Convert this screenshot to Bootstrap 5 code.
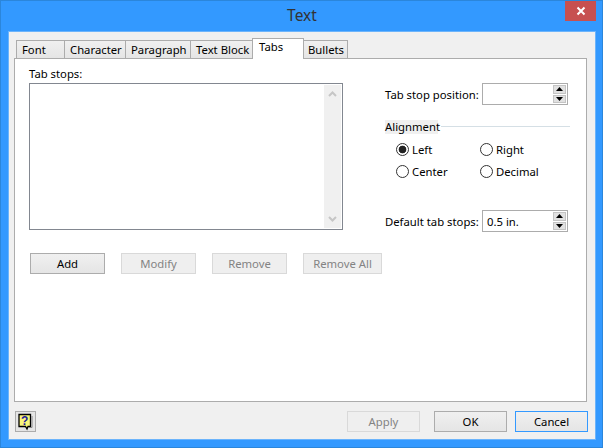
<!DOCTYPE html>
<html lang="en"><head><meta charset="utf-8"><title>Text</title>
<link href="https://cdn.jsdelivr.net/npm/bootstrap@5.3.0/dist/css/bootstrap.min.css" rel="stylesheet">
<style>
html,body{margin:0;height:448px;width:603px;overflow:hidden;background:#3399ff}
body{font-family:"Noto Sans","Open Sans",sans-serif;font-size:11.3px;line-height:15px;color:#000}
.dlg{width:603px;height:448px;border:1px solid #2b86db;background:#3399ff}
.titlebar{height:30px;position:relative}
.dlg-title{font-size:15.5px;line-height:28px;color:#333;width:100%;text-align:center;padding-left:1px}
.closer{position:absolute;top:0;right:6px;width:31px;height:20px;background:#c75050;display:flex;align-items:center;justify-content:center}
.client{margin:0 6px 0 7px;height:409px;background:#f0f0f0;border:1px solid #6cb4fb;padding:6px 8px 0 5px}
.tabrow{height:21px;padding-left:2px;align-items:flex-end;position:relative;z-index:1;flex-wrap:nowrap;border:0}
.tabx{height:18px;margin-bottom:1px;border:1px solid #acacac;border-bottom:0;background:linear-gradient(#f0f0f0,#e5e5e5);color:#000;padding:1px 0 0 5px;margin-left:-1px;white-space:nowrap;border-radius:0}
.tabx:first-child{margin-left:0}
.tabx.on{height:21px;margin-bottom:0;background:#fff;padding:0 0 0 6px}
.tabx.last{padding-left:4px}
.pane{height:344px;margin-top:-1px;background:#fff;border:1px solid #acacac;padding:7px 16px 0 14px;width:573px}
.lbl{height:17px}
.lister{width:314px;height:147px;border:1px solid #828790;background:#fff;padding:1px;justify-content:flex-end}
.sbar{width:17px;background:#f0f0f0;height:100%;flex-direction:column;justify-content:space-between;align-items:center;padding:6px 0}
.acts{margin-top:23px;margin-left:1px;gap:16px}
.wbtn{width:75px;height:21px;border:1px solid #acacac;border-radius:0;background:linear-gradient(#f0f0f0,#e5e5e5);color:#000;font:inherit;padding:0;line-height:19px}
.wbtn:disabled,.wbtn.off{background:#efefef;border-color:#d9d9d9;color:#838383;opacity:1}
.wide{width:79px}
.sidep{width:185px;margin-left:3px;padding-top:17px}
.frow{height:22px;align-items:center}
.frow label{width:97px;white-space:nowrap}
.spin{width:86px;height:22px;border:1px solid #acacac;background:#fff;padding:1px;align-items:stretch;justify-content:space-between}
.spin span{padding:2px 0 0 3px}
.spinb{width:13px;flex-direction:column;gap:1px;background:#fff}
.spinb i{flex:1;background:#e1e1e1;border:1px solid #c4c4c4;display:flex;align-items:center;justify-content:center}
.grp{margin-top:14px;height:15px;align-items:center}
.grp b{font-weight:400;background:#f0f0f0;width:53px;height:14px;line-height:14px;white-space:nowrap}
.grp hr{flex:1;margin:0 0 0 3px;border:0;height:1px;background:#d5dfe5;opacity:1}
.radios{margin:8px 0 0 11px;display:grid;grid-template-columns:84px 84px;row-gap:7px}
.rad{display:flex;align-items:center;height:15px;gap:3px}
.rad input{appearance:none;width:13px;height:13px;margin:0;border:1px solid #333;border-radius:50%;background:#fff;flex:none}
.rad input:checked{background:radial-gradient(circle,#222 0 3.5px,#fff 4.2px)}
.gapd{margin-top:31px}
.foot{height:38px;padding:9px 0 0 1px;width:574px}
.hlp{width:21px;height:21px;padding:1px;border:1px solid #acacac;background:#e5e5e5;display:flex;align-items:center;justify-content:center}
.hlp svg{display:block}
.foot .wbtn{width:73px}
.foot .ok{margin-left:14px}
.foot .cx{margin-left:8px;border-color:#3399ff}
</style></head><body>
<div class="dlg d-flex flex-column">
 <div class="titlebar d-flex"><div class="dlg-title">Text</div>
  <div class="closer"><svg width="10" height="10" viewBox="0 0 10 10"><path d="M1.500 1.500l7 7M8.500 1.500l-7 7" stroke="#fff" stroke-width="2" fill="none"/></svg></div></div>
 <div class="client">
  <div class="nav tabrow d-flex">
   <div class="tabx" style="width:49px">Font</div>
   <div class="tabx" style="width:62px">Character</div>
   <div class="tabx" style="width:66px">Paragraph</div>
   <div class="tabx" style="width:63px">Text Block</div>
   <div class="tabx on" style="width:52px">Tabs</div>
   <div class="tabx last" style="width:45px">Bullets</div>
  </div>
  <div class="pane d-flex">
   <div>
    <div class="lbl">Tab stops:</div>
    <div class="lister d-flex"><div class="sbar d-flex">
     <svg width="9" height="6" viewBox="0 0 9 6"><path d="M1 5l3.500-3.500L8 5" stroke="#c6c6c6" stroke-width="2" fill="none"/></svg>
     <svg width="9" height="6" viewBox="0 0 9 6"><path d="M1 1l3.500 3.500L8 1" stroke="#c6c6c6" stroke-width="2" fill="none"/></svg>
    </div></div>
    <div class="acts d-flex">
     <button class="btn wbtn" type="button">Add</button>
     <button class="btn wbtn" type="button" disabled>Modify</button>
     <button class="btn wbtn" type="button" disabled>Remove</button>
     <button class="btn wbtn wide" type="button" disabled>Remove All</button>
    </div>
   </div>
   <div class="sidep">
    <div class="frow d-flex"><label>Tab stop position:</label>
     <div class="spin d-flex"><span></span><div class="spinb d-flex"><i><svg width="7" height="4"><path d="M3.500 0L7 4H0z"/></svg></i><i><svg width="7" height="4"><path d="M0 0h7L3.500 4z"/></svg></i></div></div></div>
    <div class="grp d-flex"><b>Alignment</b><hr></div>
    <div class="radios">
     <label class="rad"><input type="radio" name="al" checked>Left</label>
     <label class="rad"><input type="radio" name="al">Right</label>
     <label class="rad"><input type="radio" name="al">Center</label>
     <label class="rad"><input type="radio" name="al">Decimal</label>
    </div>
    <div class="frow d-flex gapd"><label>Default tab stops:</label>
     <div class="spin d-flex"><span>0.5 in.</span><div class="spinb d-flex"><i><svg width="7" height="4"><path d="M3.500 0L7 4H0z"/></svg></i><i><svg width="7" height="4"><path d="M0 0h7L3.500 4z"/></svg></i></div></div></div>
   </div>
  </div>
  <div class="foot d-flex">
   <div class="hlp"><svg width="17" height="18" viewBox="0 0 17 18"><path d="M2 1.500h11.500v12h-2.500l-1 2.500-1.500-2.500h-6.500z" fill="#fbf67a" stroke="#000" stroke-width="1.300"/><path d="M15 3v11.500h-3" fill="none" stroke="#888"/><text x="7.700" y="12" text-anchor="middle" font-family="Liberation Sans" font-weight="700" font-size="12" fill="#1a1a9c">?</text></svg></div>
   <button class="btn wbtn off ms-auto" type="button" disabled>Apply</button>
   <button class="btn wbtn ok" type="button">OK</button>
   <button class="btn wbtn cx" type="button">Cancel</button>
  </div>
 </div>
</div>
<script src="https://cdn.jsdelivr.net/npm/bootstrap@5.3.0/dist/js/bootstrap.bundle.min.js"></script>
</body></html>
